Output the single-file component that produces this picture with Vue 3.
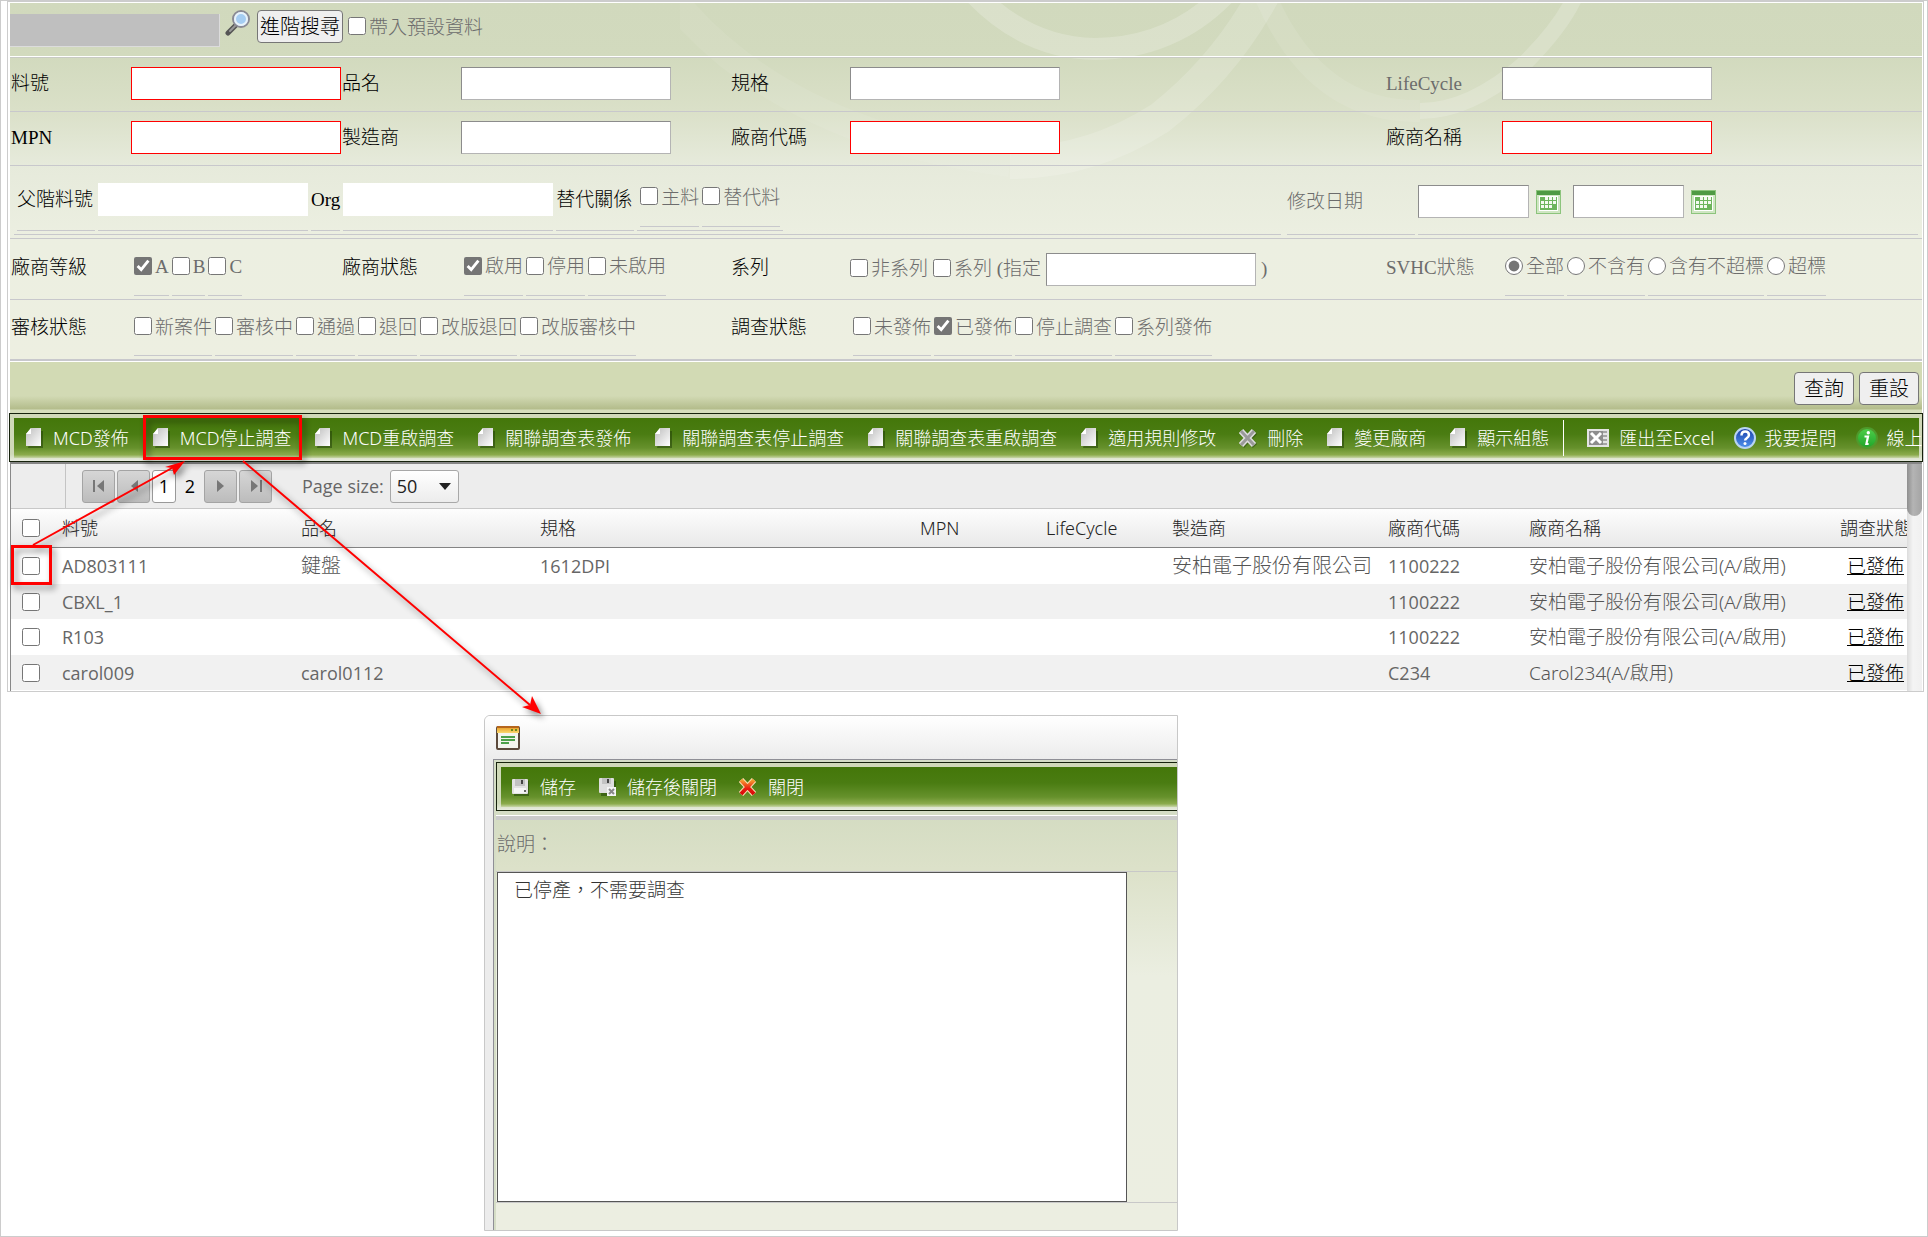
<script setup>
import { ref } from 'vue'

const grades = [
  { label: 'A', on: true },
  { label: 'B', on: false },
  { label: 'C', on: false },
]
const vendorStates = [
  { label: '啟用', on: true },
  { label: '停用', on: false },
  { label: '未啟用', on: false },
]
const svhcStates = ['全部', '不含有', '含有不超標', '超標']
const svhc = ref('全部')
const reviewStates = ['新案件', '審核中', '通過', '退回', '改版退回', '改版審核中']
const surveyStates = [
  { label: '未發佈', on: false },
  { label: '已發佈', on: true },
  { label: '停止調查', on: false },
  { label: '系列發佈', on: false },
]
const tools = [
  { icon: 'page', label: 'MCD發佈' },
  { icon: 'page', label: 'MCD停止調查' },
  { icon: 'page', label: 'MCD重啟調查' },
  { icon: 'page', label: '關聯調查表發佈' },
  { icon: 'page', label: '關聯調查表停止調查' },
  { icon: 'page', label: '關聯調查表重啟調查' },
  { icon: 'page', label: '適用規則修改' },
  { icon: 'cross', label: '刪除' },
  { icon: 'page', label: '變更廠商' },
  { icon: 'page', label: '顯示組態' },
  { icon: 'excel', label: '匯出至Excel' },
  { icon: 'help', label: '我要提問' },
  { icon: 'info', label: '線上' },
]
const rows = [
  { no: 'AD803111', name: '鍵盤', spec: '1612DPI', maker: '安柏電子股份有限公司', code: '1100222', vendor: '安柏電子股份有限公司(A/啟用)' },
  { no: 'CBXL_1', name: '', spec: '', maker: '', code: '1100222', vendor: '安柏電子股份有限公司(A/啟用)' },
  { no: 'R103', name: '', spec: '', maker: '', code: '1100222', vendor: '安柏電子股份有限公司(A/啟用)' },
  { no: 'carol009', name: 'carol0112', spec: '', maker: '', code: 'C234', vendor: 'Carol234(A/啟用)' },
]
const note = ref('已停產，不需要調查')
</script>

<template>
  <div class="page" lang="zh-Hant">
    <svg width="0" height="0" class="defs" aria-hidden="true">
      <defs>
        <linearGradient id="gPage" x1="0" y1="0" x2="1" y2="1">
          <stop offset="0" stop-color="#bdbdbd" />
          <stop offset="1" stop-color="#fff" />
        </linearGradient>
        <linearGradient id="gBlue" x1="0" y1="0" x2="0" y2="1">
          <stop offset="0" stop-color="#1c3fa8" />
          <stop offset="1" stop-color="#4f93ee" />
        </linearGradient>
        <linearGradient id="gGreen" x1="0" y1="0" x2="0" y2="1">
          <stop offset="0" stop-color="#4fcf4a" />
          <stop offset="1" stop-color="#1fa52a" />
        </linearGradient>
        <linearGradient id="gOrange" x1="0" y1="0" x2="0" y2="1">
          <stop offset="0" stop-color="#e89a20" />
          <stop offset="1" stop-color="#fbd970" />
        </linearGradient>
        <linearGradient id="gRed" x1="0" y1="0" x2="0" y2="1">
          <stop offset="0" stop-color="#f5a030" />
          <stop offset="0.6" stop-color="#e81e10" />
          <stop offset="1" stop-color="#d80808" />
        </linearGradient>
      </defs>
    </svg>

    <main class="panel">
      <section class="search">
        <svg class="swirl" width="1000" height="240" viewBox="0 0 1000 240" fill="none" stroke="#fff" aria-hidden="true">
          <path d="M-20-20Q90 130 330 160" stroke-width="28" stroke-opacity=".07" />
          <path d="M330 160Q410 160 480 115Q550 60 590-20" stroke-width="32" stroke-opacity=".16" />
          <path d="M285-20Q340 45 415 46Q500 45 555-20" stroke-width="22" stroke-opacity=".2" />
          <path d="M580-20Q630 110 740 108" stroke-width="22" stroke-opacity=".09" />
          <path d="M740 108Q790 108 845 60Q890 15 900-20" stroke-width="16" stroke-opacity=".18" />
        </svg>

        <div class="quick">
          <div class="masked"></div>
          <svg class="lens" width="26" height="26" viewBox="0 0 26 26">
            <path d="M11 15L3 23" stroke="#555" stroke-width="5" stroke-linecap="round" />
            <path d="M11 15L5 21" stroke="#999" stroke-width="2" stroke-linecap="round" />
            <circle cx="16" cy="9" r="8" fill="#c8e2f8" stroke="#8a8a94" stroke-width="2" />
            <circle cx="16" cy="9" r="6" fill="#a5cdf2" stroke="#e8f2fa" stroke-width="2" />
          </svg>
          <button type="button" class="btn adv">進階搜尋</button>
          <label class="opt"><input type="checkbox" />帶入預設資料</label>
        </div>

        <div class="row">
          <label for="f1">料號</label><div><input id="f1" class="box need" /></div>
          <label for="f2">品名</label><div><input id="f2" class="box" /></div>
          <label for="f3">規格</label><div><input id="f3" class="box" /></div>
          <label for="f4" class="soft">LifeCycle</label><div><input id="f4" class="box" /></div>
        </div>
        <div class="row">
          <label for="f5">MPN</label><div><input id="f5" class="box need" /></div>
          <label for="f6">製造商</label><div><input id="f6" class="box" /></div>
          <label for="f7">廠商代碼</label><div><input id="f7" class="box need" /></div>
          <label for="f8">廠商名稱</label><div><input id="f8" class="box need" /></div>
        </div>

        <div class="nest">
          <div class="nest-main">
            <label class="cell name" for="f9">父階料號</label>
            <div class="cell"><input id="f9" class="box plain" /></div>
            <label class="cell" for="f10">Org</label>
            <div class="cell"><input id="f10" class="box plain" /></div>
            <div class="cell name">替代關係</div>
            <div class="cell pair">
              <label class="opt lined"><input type="checkbox" />主料</label>
              <label class="opt lined"><input type="checkbox" />替代料</label>
            </div>
          </div>
          <label class="nest-label soft" for="d1">修改日期</label>
          <div class="nest-date">
            <template v-for="n in 2" :key="n">
              <input :id="'d' + n" class="box date" aria-label="修改日期" />
              <svg class="cal" width="25" height="24" viewBox="0 0 25 24">
                <rect x=".5" y=".5" width="24" height="23" fill="#cfe6c2" stroke="#8cc47c" />
                <rect x="1" y="1" width="23" height="4" fill="#4f9a44" />
                <rect x="3" y="6" width="19" height="15" fill="#fff" />
                <rect x="4" y="7" width="17" height="13" fill="#6db55c" />
                <path d="M9 7h3v3h-3zM13 7h3v3h-3zM17 7h3v3h-3zM5 11h3v3h-3zM9 11h3v3h-3zM13 11h3v3h-3zM17 11h3v3h-3zM5 15h3v3h-3zM9 15h3v3h-3zM13 15h3v3h-3z" fill="#f4faf0" />
              </svg>
            </template>
          </div>
        </div>

        <div class="row tall">
          <span>廠商等級</span>
          <div class="opts">
            <label v-for="g in grades" :key="g.label" class="opt lined"><input type="checkbox" :checked="g.on" />{{ g.label }}</label>
          </div>
          <span>廠商狀態</span>
          <div class="opts">
            <label v-for="s in vendorStates" :key="s.label" class="opt lined"><input type="checkbox" :checked="s.on" />{{ s.label }}</label>
          </div>
          <span>系列</span>
          <div class="series">
            <label class="opt"><input type="checkbox" />非系列</label>
            <label class="opt"><input type="checkbox" />系列 (指定</label>
            <input class="box" aria-label="指定系列" />
            <span class="soft">)</span>
          </div>
          <span class="soft">SVHC狀態</span>
          <div class="opts">
            <label v-for="s in svhcStates" :key="s" class="opt lined"><input v-model="svhc" type="radio" name="svhc" :value="s" />{{ s }}</label>
          </div>
        </div>
        <div class="row tall last">
          <span>審核狀態</span>
          <div class="opts wide">
            <label v-for="s in reviewStates" :key="s" class="opt lined"><input type="checkbox" />{{ s }}</label>
          </div>
          <span>調查狀態</span>
          <div class="opts">
            <label v-for="s in surveyStates" :key="s.label" class="opt lined"><input type="checkbox" :checked="s.on" />{{ s.label }}</label>
          </div>
        </div>
      </section>

      <div class="actions">
        <button type="button" class="btn">查詢</button>
        <button type="button" class="btn">重設</button>
      </div>

      <nav class="toolbar main-tools">
        <div class="green">
          <button v-for="t in tools" :key="t.label" type="button" class="tool" :class="t.icon">
            <svg v-if="t.icon === 'page'" width="18" height="20" viewBox="0 0 18 20">
              <path d="M7 3h11v17H3z" fill="#1d3a06" opacity=".5" />
              <path d="M6 0H16V18H1V6Z" fill="url(#gPage)" />
              <path d="M6 0V6H1Z" fill="#fff" />
            </svg>
            <svg v-else-if="t.icon === 'cross'" width="18" height="20" viewBox="0 0 18 20">
              <path d="M3 4L16 18M16 4L3 18" stroke="#2c4a14" stroke-width="6" opacity=".5" />
              <path d="M2 3L15 17M15 3L2 17" stroke="#dedede" stroke-width="6" />
              <path d="M2 3L15 17M15 3L2 17" stroke="#9a9a9a" stroke-width="3" />
            </svg>
            <svg v-else-if="t.icon === 'excel'" width="22" height="20" viewBox="0 0 22 20">
              <rect x="0" y="1" width="22" height="18" fill="#e4e4e4" />
              <rect x="2" y="3" width="14" height="14" fill="#8d8d8d" />
              <path d="M4 5L14 15M14 5L4 15" stroke="#fff" stroke-width="3" />
              <path d="M16 4h4M16 8h4M16 12h4M16 16h4" stroke="#a5a5a5" stroke-width="2" />
            </svg>
            <svg v-else-if="t.icon === 'help'" width="24" height="24" viewBox="0 0 24 24">
              <circle cx="12" cy="12" r="10" fill="url(#gBlue)" stroke="#b9d4f2" stroke-width="2" />
              <path d="M8.500 9.500q0-4 3.700-4t3.700 3.400q0 2-2.200 3.300-1.600 1-1.600 2.300" stroke="#fff" stroke-width="2.500" fill="none" />
              <circle cx="12" cy="17.500" r="1.500" fill="#fff" />
            </svg>
            <svg v-else width="24" height="24" viewBox="0 0 24 24">
              <circle cx="12" cy="12" r="10" fill="url(#gGreen)" stroke="#4f9a2c" stroke-width="2" />
              <circle cx="13.300" cy="6.700" r="1.700" fill="#fff" />
              <path d="M9.500 10.500h3.500l-1.600 7.500h2.200" stroke="#fff" stroke-width="2.200" fill="none" />
            </svg>
            <span>{{ t.label }}</span>
          </button>
        </div>
      </nav>

      <section class="grid">
        <div class="grid-body">
          <div class="pager">
            <span class="gutter"></span>
            <button type="button" class="pg first" aria-label="第一頁"><svg width="14" height="14" viewBox="0 0 14 14"><path d="M2 1v12" stroke="#777" stroke-width="2" /><path d="M12 1v12L5 7z" fill="#777" /></svg></button>
            <button type="button" class="pg" aria-label="上一頁"><svg width="14" height="14" viewBox="0 0 14 14"><path d="M11 1v12L4 7z" fill="#777" /></svg></button>
            <a href="#" class="num cur">1</a>
            <a href="#" class="num">2</a>
            <button type="button" class="pg" aria-label="下一頁"><svg width="14" height="14" viewBox="0 0 14 14"><path d="M3 1v12l7-6z" fill="#777" /></svg></button>
            <button type="button" class="pg" aria-label="最後一頁"><svg width="14" height="14" viewBox="0 0 14 14"><path d="M12 1v12" stroke="#777" stroke-width="2" /><path d="M2 1v12l7-6z" fill="#777" /></svg></button>
            <label class="size" for="size">Page size:</label>
            <div class="combo">
              <select id="size"><option>50</option></select>
              <svg width="12" height="8" viewBox="0 0 12 8"><path d="M0 1h12L6 8z" fill="#222" /></svg>
            </div>
          </div>
          <table>
            <colgroup>
              <col class="c-chk" /><col class="c-no" /><col class="c-no" /><col /><col class="c-mpn" /><col class="c-mpn" />
              <col class="c-maker" /><col class="c-code" /><col class="c-vendor" /><col class="c-state" />
            </colgroup>
            <thead>
              <tr>
                <th><input type="checkbox" aria-label="全選" /></th>
                <th>料號</th><th>品名</th><th>規格</th><th>MPN</th><th>LifeCycle</th>
                <th>製造商</th><th>廠商代碼</th><th>廠商名稱</th><th>調查狀態</th>
              </tr>
            </thead>
            <tbody>
              <tr v-for="r in rows" :key="r.no">
                <td><input type="checkbox" :aria-label="r.no" /></td>
                <td>{{ r.no }}</td>
                <td :class="{ han: r.name === '鍵盤' }">{{ r.name }}</td>
                <td>{{ r.spec }}</td>
                <td></td>
                <td></td>
                <td class="han">{{ r.maker }}</td>
                <td>{{ r.code }}</td>
                <td class="mix">{{ r.vendor }}</td>
                <td class="link mix"><a href="#">已發佈</a></td>
              </tr>
            </tbody>
          </table>
        </div>
        <div class="track"><div class="thumb"></div></div>
      </section>
    </main>

    <section class="dialog">
      <header>
        <svg width="24" height="24" viewBox="0 0 24 24">
          <rect x="1" y="1" width="22" height="22" rx="1" fill="#f4f4ee" stroke="#5c4a3c" stroke-width="2" />
          <rect x="1" y="1" width="22" height="6" fill="url(#gOrange)" />
          <path d="M1 1h22" stroke="#b5651c" stroke-width="2" />
          <path d="M15 4h2M19 4h2" stroke="#6b8a1c" stroke-width="2" />
          <path d="M5 11h14M5 14h14M5 17h8" stroke="#4da04a" stroke-width="2" />
        </svg>
      </header>
      <div class="dialog-body">
        <nav class="toolbar">
          <div class="green">
            <button type="button" class="tool">
              <svg width="18" height="18" viewBox="0 0 18 18">
                <path d="M3 3h15v15H3z" fill="#274a0a" opacity=".6" />
                <rect x="1" y="1" width="16" height="15" rx="1" fill="#e2e2e2" />
                <rect x="4" y="1" width="10" height="7" fill="#c2c2c2" />
                <rect x="10" y="2" width="2" height="4" fill="#444" />
                <path d="M3 10h12v5H3z" fill="#f6f6f6" /><path d="M13 12h2v2h-2z" fill="#666" />
              </svg>
              <span>儲存</span>
            </button>
            <button type="button" class="tool">
              <svg width="18" height="18" viewBox="0 0 18 18">
                <path d="M3 3h15v15H3z" fill="#274a0a" opacity=".6" />
                <rect x="1" y="0" width="15" height="15" rx="1" fill="#dedede" />
                <rect x="4" y="0" width="9" height="6" fill="#c2c2c2" />
                <rect x="9" y="1" width="2" height="4" fill="#444" />
                <rect x="9" y="9" width="9" height="9" fill="#f4f4f4" />
                <path d="M11 11l5 5M16 11l-5 5" stroke="#888" stroke-width="2" />
              </svg>
              <span>儲存後關閉</span>
            </button>
            <button type="button" class="tool">
              <svg width="18" height="18" viewBox="0 0 18 18">
                <path d="M2 2L15 16M15 2L2 16" stroke="#f6dcae" stroke-width="6" />
                <path d="M2 2L15 16M15 2L2 16" stroke="url(#gRed)" stroke-width="4" />
              </svg>
              <span>關閉</span>
            </button>
          </div>
        </nav>
        <div class="form">
          <label for="note">說明：</label>
          <div class="note"><textarea id="note" v-model="note"></textarea></div>
        </div>
      </div>
    </section>

    <svg class="marks" width="560" height="740" viewBox="0 0 560 740" fill="none" stroke="#f00" aria-hidden="true">
      <rect x="144.500" y="416.500" width="156" height="42" stroke-width="3" />
      <rect x="12.500" y="546.500" width="38" height="37" stroke-width="3" />
      <path d="M33 545L172 468M243 461L530 705" stroke-width="2" />
      <path d="M185 461L174 475L172 468L165 467Z" fill="#f00" stroke="none" />
      <path d="M541 714L522 707L530 705L532 696Z" fill="#f00" stroke="none" />
    </svg>
  </div>
</template>

<style>
body {
  margin: 0;
  background: #fff;
}
</style>

<style scoped>
.page {
  position: relative;
  box-sizing: border-box;
  min-height: 100vh;
  padding: 0 3px 5px 6px;
  border: 1px solid #ccc;
  background: #fff;
  color: #000;
  font: 300 19px/26px "Liberation Serif", "Noto Sans CJK TC", serif;
}
.page *,
.page *::before,
.page *::after {
  box-sizing: border-box;
}
.defs {
  position: absolute;
}
.panel {
  padding: 1px 1px 0 2px;
  border: 1px solid #ccc;
}
input[type="checkbox"],
input[type="radio"] {
  flex: none;
  width: 18px;
  height: 18px;
  margin: 0;
  accent-color: #757575;
}
.soft {
  color: #6c6c6c;
}

/* search form */
.search {
  position: relative;
  overflow: hidden;
  background: linear-gradient(#d1d9bd 0, #d2dabe 54px, #dae0c8 107px, #e6eadb 161px, #ecefe1 235px, #edefe1 100%);
}
.swirl {
  position: absolute;
  top: 0;
  left: 670px;
}
.search > div {
  position: relative;
}
.quick {
  display: flex;
  align-items: flex-start;
  height: 55px;
  padding-top: 7px;
  border-bottom: 1px solid #c8cac4;
  box-shadow: inset 0 -1px #fff;
}
.masked {
  width: 210px;
  height: 33px;
  margin-top: 4px;
  border: solid #dcdcdc;
  border-width: 0 1px 1px 0;
  background: #bfbfbf;
}
.lens {
  margin: 0 6px 0 5px;
}
.btn {
  height: 33px;
  min-width: 60px;
  padding: 0;
  border: 1px solid #767676;
  border-radius: 4px;
  background: #efefef;
  color: #000;
  font: inherit;
  font-size: 20px;
}
.adv {
  width: 86px;
  margin-right: 5px;
}
.opt {
  display: flex;
  align-items: center;
  gap: 3px;
  color: #6c6c6c;
  white-space: nowrap;
}
.opt input {
  margin-bottom: 3px;
}
.quick .opt {
  height: 35px;
}
.row {
  display: grid;
  grid-template-columns: 120px 211fr 119px 270fr 119px 536fr 116px 420fr;
  align-items: center;
  padding: 9px 0 11px 1px;
  border-bottom: 1px solid #c8c8cc;
}
.row > label,
.row > span {
  white-space: nowrap;
}
.box {
  display: block;
  width: 210px;
  height: 33px;
  padding: 0 4px;
  border: 1px solid;
  border-color: #8c8c8c #b4b4b4 #b4b4b4 #8c8c8c;
  background: #fff;
  font: inherit;
}
.box.need {
  border-color: #f00;
}
.box.plain {
  border-color: #fff;
}
.box.date {
  width: 111px;
}
.nest {
  display: flex;
  height: 73px;
  padding: 3px 4px;
  border-bottom: 1px solid #c8c8cc;
}
.nest-main {
  display: flex;
  flex: 1265;
  gap: 3px;
  margin-right: 6px;
  padding: 0 3px 3px;
  border-bottom: 1px solid #c8c8cc;
}
.cell,
.nest-label,
.nest-date {
  display: flex;
  align-items: center;
  border-bottom: 1px solid #c8c8cc;
  white-space: nowrap;
}
.cell.name {
  padding-right: 2px;
}
.cell.pair {
  align-items: stretch;
  gap: 3px;
  padding: 0 3px 3px;
}
.nest-label {
  flex: 128;
  margin-right: 3px;
}
.nest-date {
  flex: 502;
}
.cal {
  margin: 0 12px 0 7px;
}
.lined {
  border-bottom: 1px solid #c8c8cc;
}
.row.tall {
  height: 61px;
  padding: 0 0 3px 1px;
  align-items: stretch;
}
.row.tall > span {
  display: flex;
  align-items: center;
}
.opts {
  display: flex;
  gap: 3px;
  padding-left: 3px;
}
.opts.wide {
  grid-column: 2 / 5;
}
.series {
  display: flex;
  align-items: center;
  gap: 5px;
  padding-top: 3px;
}
.row.tall.last {
  border-bottom-width: 2px;
}

.actions {
  display: flex;
  justify-content: flex-end;
  gap: 5px;
  height: 52px;
  padding: 10px 3px 0 0;
  border-top: 1px solid #fff;
  background: linear-gradient(#d2dab4 0, #d2dab4 34px, #b3bc8b 47px, #d6debc 48px, #d6debc 100%);
}

/* icon toolbars */
.toolbar {
  height: 49px;
  padding: 4px;
  border: 1px solid #16220c;
  background: linear-gradient(#d0d9b8, #cfd9ba 40px, #e8ece0);
  overflow: hidden;
}
.main-tools {
  margin: 0 -1px;
  padding-right: 3px;
}
.green {
  display: flex;
  align-items: center;
  gap: 23px;
  height: 40px;
  padding: 0 0 1px 11px;
  background: linear-gradient(#44770a 0, #4a7c12 40%, #66912c 75%, #8bab4c 92%, #c8d6a8 100%);
}
.tool {
  display: flex;
  flex: none;
  align-items: center;
  gap: 10px;
  height: 36px;
  padding: 0;
  border: 0;
  background: none;
  color: #fff;
  font: 300 18px/26px "Noto Sans", "Noto Sans CJK TC", sans-serif;
  white-space: nowrap;
}
.tool.excel {
  margin-left: -9px;
  padding-left: 23px;
  border-left: 1px solid #fff;
}
.tool.help,
.tool.info {
  gap: 8px;
  margin-left: -5px;
}

/* result grid */
.grid {
  display: flex;
  height: 229px;
  overflow: hidden;
  border-top: 2px solid #868686;
  font: 400 18px/26px "Open Sans", "Noto Sans CJK TC", sans-serif;
}
.grid-body {
  flex: 1;
  min-width: 0;
  border-left: 1px solid #888;
  overflow: hidden;
}
.pager {
  display: flex;
  align-items: center;
  height: 45px;
  border-bottom: 1px solid #c8c8c8;
  background: #ededed;
}
.gutter {
  align-self: stretch;
  width: 55px;
  border-right: 1px solid #c4c4c4;
}
.pg {
  display: flex;
  align-items: center;
  justify-content: center;
  width: 33px;
  height: 33px;
  margin-right: 2px;
  padding: 0;
  border: 1px solid #a4a4a4;
  border-radius: 3px;
  background: linear-gradient(#d6d6d6, #bcbcbc);
}
.pg.first {
  margin-left: 16px;
}
.num {
  width: 24px;
  height: 33px;
  margin-right: 2px;
  border: 1px solid transparent;
  border-radius: 3px;
  color: #000;
  line-height: 31px;
  text-align: center;
  text-decoration: none;
}
.num.cur {
  border-color: #999;
  background: #fff;
}
.size {
  margin: 0 6px 0 28px;
  color: #666;
}
.combo {
  position: relative;
  width: 69px;
  height: 33px;
}
.combo select {
  width: 100%;
  height: 100%;
  padding: 0 6px;
  appearance: none;
  border: 1px solid #a8a8a8;
  border-radius: 3px;
  background: linear-gradient(#fff, #ececec);
  color: #222;
  font: inherit;
}
.combo svg {
  position: absolute;
  top: 12px;
  right: 8px;
}
table {
  width: 100%;
  table-layout: fixed;
  border-collapse: separate;
  border-spacing: 0;
  color: #666;
}
.c-chk { width: 42px; }
.c-no { width: 239px; }
.c-mpn { width: 126px; }
.c-maker { width: 216px; }
.c-code { width: 141px; }
.c-vendor { width: 311px; }
.c-state { width: 76px; }
th,
td {
  height: 36px;
  padding: 0 0 0 9px;
  text-align: left;
  white-space: nowrap;
}
tr:nth-child(even) td {
  height: 35px;
}
th {
  height: 39px;
  border-bottom: 1px solid #848484;
  background: linear-gradient(#fdfdfd, #e9e9e9);
  color: #222;
  font-family: "Noto Sans", "Noto Sans CJK TC", sans-serif;
  font-weight: 300;
}
th:first-child,
td:first-child {
  padding-left: 11px;
}
th input,
td input {
  display: block;
}
tbody tr:nth-child(even) {
  background: #f1f1f1;
}
.han,
.mix {
  color: #555;
  font-family: "Noto Sans", "Noto Sans CJK TC", sans-serif;
  font-size: 20px;
  font-weight: 300;
}
.mix {
  font-size: 19px;
}
.link {
  padding-left: 16px;
}
.link a {
  color: #000;
}
.track {
  width: 15px;
  margin-top: -2px;
  background: linear-gradient(90deg, #dcdcdc, #f4f4f4 40%, #f0f0f0);
}
.thumb {
  height: 54px;
  border-radius: 4px 4px 8px 8px;
  background: linear-gradient(90deg, #8e8e8e, #b4b4b4 40%, #a4a4a4);
}

/* pop-up window */
.dialog {
  width: 694px;
  max-width: 100%;
  margin: 23px 0 0 477px;
  border: 1px solid #c8c8c8;
  border-radius: 6px 0 0 0;
  background: #ececec;
}
.dialog header {
  height: 43px;
  padding: 10px 11px 0;
  border-radius: 5px 0 0 0;
  background: linear-gradient(#fff, #ececec);
}
.dialog-body {
  margin-left: 8px;
  padding: 2px 0 0 2px;
  border: solid #8f8f96;
  border-width: 1px 0 0 1px;
  background: #d5ddc6;
}
.dialog .toolbar {
  padding-right: 0;
  border-right: 0;
}
.dialog .green {
  gap: 22px;
  padding-left: 10px;
}
.dialog .tool {
  gap: 11px;
}
.form {
  margin-top: 4px;
  padding-bottom: 27px;
  border-top: 1px solid #fff;
  background: linear-gradient(#d4dcc2, #dce1c9 52px, #ebeee1 160px, #eceee1);
}
.form label {
  display: block;
  height: 55px;
  padding: 12px 0 0 1px;
  border-top: 4px solid #cbcbcb;
  color: #6c6c6c;
}
.note {
  padding-left: 1px;
  border: solid #c8c8c8;
  border-width: 1px 0;
}
.note textarea {
  display: block;
  width: 630px;
  height: 330px;
  padding: 5px 16px;
  border: 1px solid #555;
  border-radius: 0;
  background: #fff;
  color: #333;
  font: inherit;
  resize: none;
}

/* guide marks */
.marks {
  position: absolute;
  top: -1px;
  left: -1px;
  pointer-events: none;
  filter: drop-shadow(3px 4px 3px rgba(0, 0, 0, 0.45));
}
</style>
